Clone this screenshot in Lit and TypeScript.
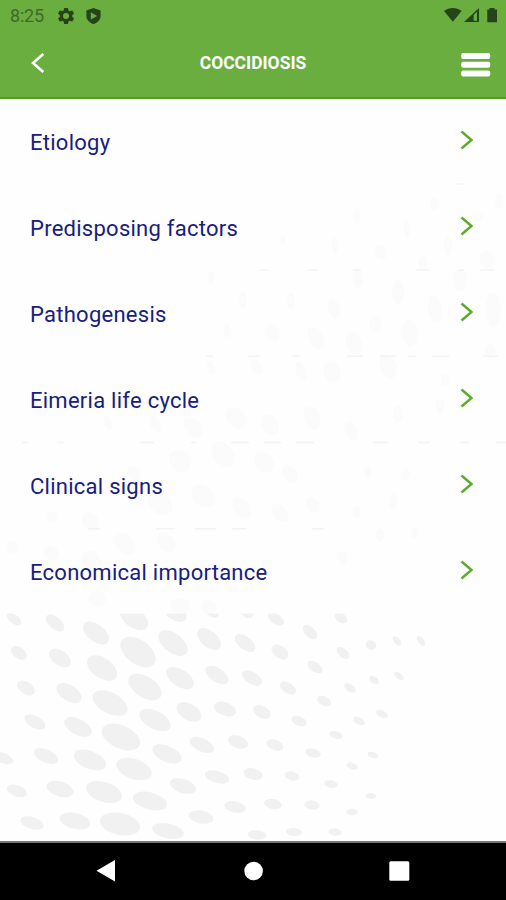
import { LitElement, html, svg, css } from "lit";
import { customElement, property } from "lit/decorators.js";

// cx, cy, rx, ry, rotation
const DOTS: number[][] = [
  [14, 619, 8.5, 4.5, 38], [55, 623, 11, 6, 40], [96, 633, 15, 8.5, 38], [134, 618, 16, 9.5, 36], [175, 612, 13, 8, 36],
  [138, 652, 20, 12, 36], [173, 643, 17, 9.5, 38], [209, 639, 14, 8, 40], [19, 653, 9, 5.5, 36], [60, 658, 12.5, 7.5, 36],
  [102, 668, 17, 10, 35], [145, 687, 18.5, 10.5, 32], [180, 678, 15.5, 8.5, 33], [26, 688, 10, 6, 34], [69, 693, 14, 8, 32],
  [110, 703, 19, 10.5, 28], [189, 712, 13.5, 8, 30], [155, 720, 17, 9, 28], [35, 722, 11.5, 6, 28], [78, 727, 15, 8, 28],
  [121, 737, 20.5, 11.5, 24], [202, 745, 13, 6.5, 24], [3, 758, 11, 5, 22], [46, 756, 13, 6.5, 24], [90, 760, 17, 9, 22],
  [134, 769, 18.5, 10, 20], [167, 754, 15.5, 8, 24], [217, 777, 12.5, 6, 15], [17, 791, 10.5, 5.5, 20], [60, 789, 14, 7.5, 18],
  [104, 792, 18.5, 10, 18], [150, 801, 17.5, 8.5, 15], [183, 786, 13.5, 7, 18], [32, 823, 12, 6, 18], [75, 821, 15.5, 8, 13],
  [120, 824, 20.5, 11, 12], [168, 831, 16, 7.5, 12], [201, 817, 12.5, 6.5, 10], [276, 619, 9, 5, 34], [246, 612, 8, 5, 36],
  [211, 611, 9, 5, 36], [341, 618, 7, 4.5, 36], [310, 632, 9, 5, 45], [245, 643, 12, 6.5, 38], [280, 652, 9.5, 6, 36],
  [343, 653, 7.5, 4.5, 40], [371, 645, 5.5, 4.5, 30], [397, 641, 5.8, 3, 50], [421, 641, 5.8, 3, 52], [217, 675, 13, 7, 34],
  [315, 667, 8.5, 4.7, 36], [252, 678, 11, 6, 32], [288, 688, 9, 5.2, 34], [350, 688, 6.5, 3.7, 34], [374, 680, 5.5, 3.5, 36],
  [399, 676, 5.5, 3, 38], [225, 709, 11.5, 6.7, 20], [262, 712, 9.5, 6, 28], [324, 701, 7.5, 4.7, 26], [382, 714, 6.5, 3.3, 28],
  [299, 721, 8, 4.7, 22], [359, 721, 6.5, 3.5, 28], [238, 742, 10.5, 6, 20], [275, 745, 9, 5.2, 22], [313, 753, 8, 4.5, 16],
  [336, 735, 6.8, 3.7, 18], [373, 755, 5.5, 3, 18], [352, 766, 5.8, 3.3, 20], [253, 774, 9.7, 5.7, 16], [292, 776, 7.5, 4.5, 14],
  [331, 784, 6.8, 3.7, 10], [371, 796, 5.5, 3, 4], [235, 807, 11, 5.7, 12], [273, 804, 9, 5, 12], [312, 805, 7.8, 4.5, 10],
  [352, 812, 6, 3.3, 2], [294, 832, 8, 4, 4], [335, 832, 6.5, 3.7, 6], [257, 835, 9.3, 4.7, 6],
];

// Dots showing faintly through the translucent rows
const FAINT: number[][] = [
  [434, 204, 4, 6, 0], [478, 217, 5, 5, 0], [499, 201, 4, 8, 0], [357, 216, 3, 7, 0], [407, 229, 3, 9, 0], [448, 246, 4, 10, 0],
  [283, 240, 3, 5, 0], [335, 246, 3, 9, 0], [381, 252, 6, 8, -20], [423, 263, 5, 7, 0], [487, 260, 7, 9, 0], [211, 278, 3, 7, 0],
  [358, 279, 5, 9, 0], [398, 292, 6, 12, 0], [460, 280, 8, 11, 0], [243, 300, 4, 8, 0], [291, 301, 4, 8, 0], [334, 309, 6, 10, -15],
  [435, 309, 7, 14, -10], [493, 310, 8, 17, 0], [227, 331, 3, 7, 0], [272, 333, 6, 9, -25], [316, 338, 7, 12, -25],
  [375, 324, 6, 9, 0], [410, 333, 8, 13, 0], [354, 343, 8, 12, -20], [388, 366, 8, 13, -20], [490, 351, 6, 7, 0],
  [211, 368, 4, 7, -20], [256, 367, 5, 8, -20], [301, 371, 5, 10, -20], [332, 372, 8, 11, -20], [445, 380, 4, 6, 0],
  [108, 423, 4, 8, -20], [155, 424, 5, 9, -30], [193, 427, 8, 12, -40], [236, 418, 9, 12, -35], [270, 425, 8, 11, -35],
  [312, 418, 8, 12, -20], [351, 431, 6, 10, -20], [398, 414, 5, 8, 0], [440, 406, 4, 8, 0], [180, 461, 10, 12, -45],
  [223, 454, 10, 14, -40], [264, 462, 9, 11, -40], [290, 474, 7, 10, -30], [134, 473, 6, 8, -35], [368, 472, 4, 6, 0],
  [406, 474, 4, 6, 0], [160, 503, 10, 14, -45], [203, 496, 10, 13, -45], [242, 508, 8, 12, -40], [280, 513, 7, 10, -40],
  [313, 505, 6, 8, -30], [357, 512, 4, 6, 0], [393, 502, 4, 8, 0], [52, 517, 5, 6, -40], [90, 521, 8, 9, -45],
  [125, 544, 9, 12, -45], [166, 542, 8, 11, -45], [13, 547, 6, 7, -40], [51, 553, 7, 8, -45], [91, 560, 9, 10, -45],
  [380, 535, 4, 6, 0], [415, 533, 4, 5, 0], [343, 558, 5, 7, 0], [97, 599, 9, 8, 0], [180, 606, 10, 8, 0], [209, 607, 8, 7, 0],
];

// y, then start/end pairs of the visible fragments between rows
const SEAMS: number[][] = [
  [184, 456, 464],
  [270, 260, 268, 308, 318, 353, 361, 416, 429, 458, 464, 480, 494],
  [356.3, 206, 213, 248, 260, 292, 300, 347, 363, 380, 396, 408, 416, 432, 449, 483, 498],
  [442.5, 22, 28, 57, 64, 140, 154, 191, 196, 231, 249, 264, 281, 296, 314, 373, 388, 418, 430, 460, 469, 496, 506],
  [528.700, 88, 100, 156, 174, 195, 216, 232, 246, 312, 324],
];

const ellipses = (dots: number[][]) =>
  dots.map(([x, y, rx, ry, a]) => svg`<ellipse cx=${x} cy=${y} rx=${rx} ry=${ry} transform="rotate(${a} ${x} ${y})"/>`);

const seamPath = ([y, ...xs]: number[]) => {
  let d = "";
  for (let i = 0; i < xs.length; i += 2) d += `M${xs[i]} ${y}H${xs[i + 1]}`;
  return d;
};

@customElement("status-bar")
class StatusBar extends LitElement {
  static styles = css`
    :host { display: flex; height: 32px; align-items: center; padding: 0 8px 0 10px; }
    .time { font-size: 18px; line-height: 32px; width: 46px; letter-spacing: -0.2px; color: #3f6b27; }
    svg { display: block; fill: #24441a; }
    .grow { flex: 1; }
    .gap { margin-left: 9px; }
  `;
  render() {
    return html`
      <span class="time">8:25</span>
      <svg width="20" height="20" viewBox="0 0 24 24"><path d="M19.4 13a7.500 7.500 0 0 0 0-2l2-1.600a.5.5 0 0 0 .1-.6l-1.900-3.300a.5.5 0 0 0-.6-.2l-2.400 1a7 7 0 0 0-1.700-1l-.4-2.500a.5.5 0 0 0-.5-.4h-3.900a.5.5 0 0 0-.5.4l-.4 2.500a7 7 0 0 0-1.700 1l-2.400-1a.5.5 0 0 0-.6.2L2.600 8.800a.5.500 0 0 0 .1.600l2 1.600a7.500 7.500 0 0 0 0 2l-2 1.600a.5.5 0 0 0-.1.600l1.900 3.300c.1.200.4.300.6.200l2.400-1a7 7 0 0 0 1.700 1l.4 2.500c0 .3.200.4.5.4h3.900c.3 0 .5-.1.500-.4l.4-2.500a7 7 0 0 0 1.700-1l2.400 1c.2.100.5 0 .6-.2l1.900-3.300a.5.5 0 0 0-.1-.600zM12 15.600a3.600 3.600 0 1 1 0-7.200 3.600 3.600 0 0 1 0 7.200z" fill-rule="evenodd"/></svg>
      <svg class="gap" width="17" height="19" viewBox="0 0 17 19"><path fill-rule="evenodd" d="M8.500 1 15.600 3.500v5.500c0 3.600-2.700 6.500-7.100 8.300-4.400-1.800-7.100-4.700-7.100-8.300V3.500zM5.800 5.200v7.400l6.400-3.700z"/></svg>
      <span class="grow"></span>
      <svg width="54" height="18" viewBox="0 0 54 18">
        <path d="M0 4C5 .1 12.500.1 17.600 4L8.800 14.800z"/>
        <path fill-rule="evenodd" d="M20 15 35 1v14zM29.600 8v5.700H33V4.800z"/>
        <path d="M45.500 1h5V2.500H53v12.800H43.300V2.500h2.200z"/>
      </svg>
    `;
  }
}

@customElement("title-bar")
class TitleBar extends LitElement {
  @property() label = "";
  static styles = css`
    :host { display: grid; grid-template-columns: 60px 1fr 60px; height: 67px; box-sizing: border-box; border-bottom: 2px solid #559c22; }
    svg { display: block; }
    .back { margin: 20px 0 0 30px; }
    .menu { margin: 20px 0 0 15px; }
    .title { text-align: center; font-weight: 700; font-size: 17.5px; line-height: 22px; margin-top: 20px; color: #fff; letter-spacing: -0.02px; }
  `;
  render() {
    return html`
      <svg class="back" width="16" height="22" viewBox="0 0 16 22"><path d="M13.300 2 3 11l10.300 9" fill="none" stroke="#fff" stroke-width="2.600"/></svg>
      <div class="title">${this.label}</div>
      <svg class="menu" width="30" height="26" viewBox="0 0 30 26" fill="#fff">
        <rect x="0.200" y="1" width="29" height="6" rx="2"/><rect x="0.200" y="9.800" width="29" height="6" rx="2"/><rect x="0.200" y="18.500" width="29" height="6" rx="2"/>
      </svg>
    `;
  }
}

@customElement("topic-row")
class TopicRow extends LitElement {
  @property() label = "";
  static styles = css`
    :host { display: flex; justify-content: space-between; height: 86.1px; padding: 0 32px 0 30px; color: #17207f; }
    span { font-size: 22px; line-height: 30px; margin-top: 29px; letter-spacing: 0.26px; white-space: nowrap; }
    svg { display: block; margin-top: 31px; }
  `;
  render() {
    return html`<span>${this.label}</span>
      <svg width="14" height="20" viewBox="0 0 14 20"><path d="M1.500 1.500 11.500 10l-10 8.500" fill="none" stroke="#5bab2c" stroke-width="2.400"/></svg>`;
  }
}

@customElement("app-root")
class AppRoot extends LitElement {
  static styles = css`
    :host { display: flex; flex-direction: column; width: 506px; height: 900px; overflow: hidden; background: #fefefe; font-family: Roboto, "Liberation Sans", sans-serif; }
    header { background: #6aae40; height: 99px; }
    main { flex: 1; position: relative; }
    .pattern { position: absolute; inset: 0; width: 506px; height: 743px; fill: #f2f1f2; }
    .faint { fill: #fbfbfb; }
    .seam { stroke: #f3f3f3; stroke-width: 1.5; fill: none; }
    .list { position: relative; }
    nav { height: 59px; background: #000; box-sizing: border-box; border-top: 2px solid #777; display: flex; align-items: center; }
    nav svg { display: block; }
  `;
  topics = ["Etiology", "Predisposing factors", "Pathogenesis", "Eimeria life cycle", "Clinical signs", "Economical importance"];
  render() {
    return html`
      <header><status-bar></status-bar><title-bar label="COCCIDIOSIS"></title-bar></header>
      <main>
        <svg class="pattern" viewBox="0 99 506 743">
          <defs><clipPath id="below"><rect x="0" y="613.500" width="506" height="228"/></clipPath></defs>
          <g class="faint">${ellipses(FAINT)}</g>
          ${SEAMS.map((s) => svg`<path class="seam" d=${seamPath(s)}/>`)}
          <g clip-path="url(#below)">${ellipses(DOTS)}</g>
        </svg>
        <div class="list">${this.topics.map((t) => html`<topic-row label=${t}></topic-row>`)}</div>
      </main>
      <nav>
        <svg width="506" height="57" viewBox="0 843 506 57" fill="#fff">
          <path d="M96.500 870.700 115 860v21.500z"/><circle cx="253.600" cy="871" r="9.300"/><rect x="389.300" y="861.300" width="20" height="19.500" rx="1.500"/>
        </svg>
      </nav>
    `;
  }
}
